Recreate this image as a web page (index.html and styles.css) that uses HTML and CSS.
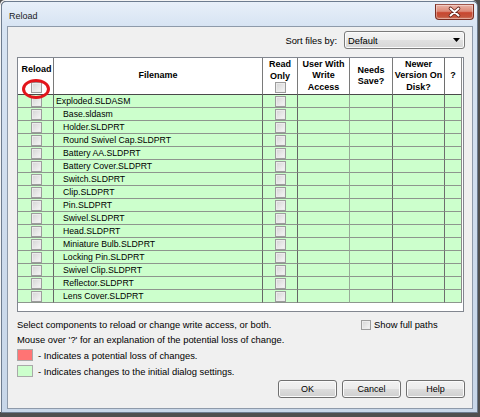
FILE: index.html
```html
<!DOCTYPE html>
<html>
<head>
<meta charset="utf-8">
<title>Reload</title>
<link rel="stylesheet" href="styles.css">
</head>
<body>
<div class="window">
  <div class="titlebar">
    <span class="title">Reload</span>
    <div class="close">
      <svg width="37" height="14" viewBox="0 0 37 14">
        <path d="M14.5 3.5 L22.5 10.5 M22.5 3.5 L14.5 10.5" stroke="#5b1d14" stroke-width="3.6" stroke-linecap="round" fill="none"/>
        <path d="M14.5 3.5 L22.5 10.5 M22.5 3.5 L14.5 10.5" stroke="#ffffff" stroke-width="2" stroke-linecap="round" fill="none"/>
      </svg>
    </div>
  </div>
  <div class="client">
    <div class="sortrow">
      <span>Sort files by:</span>
      <div class="combo">
        <span>Default</span>
        <svg width="7" height="4" viewBox="0 0 7 4"><polygon points="0,0 7,0 3.5,4" fill="#000"/></svg>
      </div>
    </div>

    <div class="listbox">
      <div class="row head">
        <div class="hc reload"><span class="rl">Reload</span><span class="cb"></span><div class="ring"></div></div>
        <div class="hc">Filename</div>
        <div class="hc ro"><span>Read<br>Only</span><span class="cb"></span></div>
        <div class="hc">User With<br>Write<br>Access</div>
        <div class="hc">Needs<br>Save?</div>
        <div class="hc">Newer<br>Version On<br>Disk?</div>
        <div class="hc">?</div>
      </div>
      <div class="row"><div class="c"><span class="cb"></span></div><div class="c fn">Exploded.SLDASM</div><div class="c"><span class="cb"></span></div><div class="c"></div><div class="c"></div><div class="c"></div><div class="c"></div></div>
      <div class="row"><div class="c"><span class="cb"></span></div><div class="c fn sub">Base.sldasm</div><div class="c"><span class="cb"></span></div><div class="c"></div><div class="c"></div><div class="c"></div><div class="c"></div></div>
      <div class="row"><div class="c"><span class="cb"></span></div><div class="c fn sub">Holder.SLDPRT</div><div class="c"><span class="cb"></span></div><div class="c"></div><div class="c"></div><div class="c"></div><div class="c"></div></div>
      <div class="row"><div class="c"><span class="cb"></span></div><div class="c fn sub">Round Swivel Cap.SLDPRT</div><div class="c"><span class="cb"></span></div><div class="c"></div><div class="c"></div><div class="c"></div><div class="c"></div></div>
      <div class="row"><div class="c"><span class="cb"></span></div><div class="c fn sub">Battery AA.SLDPRT</div><div class="c"><span class="cb"></span></div><div class="c"></div><div class="c"></div><div class="c"></div><div class="c"></div></div>
      <div class="row"><div class="c"><span class="cb"></span></div><div class="c fn sub">Battery Cover.SLDPRT</div><div class="c"><span class="cb"></span></div><div class="c"></div><div class="c"></div><div class="c"></div><div class="c"></div></div>
      <div class="row"><div class="c"><span class="cb"></span></div><div class="c fn sub">Switch.SLDPRT</div><div class="c"><span class="cb"></span></div><div class="c"></div><div class="c"></div><div class="c"></div><div class="c"></div></div>
      <div class="row"><div class="c"><span class="cb"></span></div><div class="c fn sub">Clip.SLDPRT</div><div class="c"><span class="cb"></span></div><div class="c"></div><div class="c"></div><div class="c"></div><div class="c"></div></div>
      <div class="row"><div class="c"><span class="cb"></span></div><div class="c fn sub">Pin.SLDPRT</div><div class="c"><span class="cb"></span></div><div class="c"></div><div class="c"></div><div class="c"></div><div class="c"></div></div>
      <div class="row"><div class="c"><span class="cb"></span></div><div class="c fn sub">Swivel.SLDPRT</div><div class="c"><span class="cb"></span></div><div class="c"></div><div class="c"></div><div class="c"></div><div class="c"></div></div>
      <div class="row"><div class="c"><span class="cb"></span></div><div class="c fn sub">Head.SLDPRT</div><div class="c"><span class="cb"></span></div><div class="c"></div><div class="c"></div><div class="c"></div><div class="c"></div></div>
      <div class="row"><div class="c"><span class="cb"></span></div><div class="c fn sub">Miniature Bulb.SLDPRT</div><div class="c"><span class="cb"></span></div><div class="c"></div><div class="c"></div><div class="c"></div><div class="c"></div></div>
      <div class="row"><div class="c"><span class="cb"></span></div><div class="c fn sub">Locking Pin.SLDPRT</div><div class="c"><span class="cb"></span></div><div class="c"></div><div class="c"></div><div class="c"></div><div class="c"></div></div>
      <div class="row"><div class="c"><span class="cb"></span></div><div class="c fn sub">Swivel Clip.SLDPRT</div><div class="c"><span class="cb"></span></div><div class="c"></div><div class="c"></div><div class="c"></div><div class="c"></div></div>
      <div class="row"><div class="c"><span class="cb"></span></div><div class="c fn sub">Reflector.SLDPRT</div><div class="c"><span class="cb"></span></div><div class="c"></div><div class="c"></div><div class="c"></div><div class="c"></div></div>
      <div class="row"><div class="c"><span class="cb"></span></div><div class="c fn sub">Lens Cover.SLDPRT</div><div class="c"><span class="cb"></span></div><div class="c"></div><div class="c"></div><div class="c"></div><div class="c"></div></div>
    </div>

    <div class="info first">
      <span>Select components to reload or change write access, or both.</span>
      <label class="fullpaths"><span class="cb small"></span><span>Show full paths</span></label>
    </div>
    <div class="info">Mouse over '?' for an explanation of the potential loss of change.</div>
    <div class="legend"><span class="swatch red"></span><span>- Indicates a potential loss of changes.</span></div>
    <div class="legend"><span class="swatch green"></span><span>- Indicates changes to the initial dialog settings.</span></div>

    <div class="buttons">
      <div class="btn">OK</div>
      <div class="btn">Cancel</div>
      <div class="btn">Help</div>
    </div>
  </div>
</div>
</body>
</html>
```

FILE: styles.css
```css
* { box-sizing: border-box; }

html, body { margin: 0; padding: 0; }

body {
  width: 480px;
  height: 417px;
  overflow: hidden;
  background: #4f4f4f;
  font-family: "Liberation Sans", Arial, sans-serif;
  font-size: 9.4px;
  color: #000;
}

.window {
  width: 477px;
  height: 412px;
  margin: 1px 0 0 1px;
  border: 1px solid #6d7c8f;
  border-radius: 5px 5px 0 0;
  padding: 0 4px 3px 5px;
  background: linear-gradient(#e8f0f9, #d7e4f3 24px, #cddbec 60%, #c8d7e9);
  box-shadow: -1px -1px 0 #f4f4f4;
  display: flex;
  flex-direction: column;
}

.titlebar {
  height: 24px;
  flex: none;
  display: flex;
  justify-content: space-between;
  align-items: flex-start;
  margin: 0 -1px 0 2px;
}

.title {
  padding-top: 8px;
  font-size: 9px;
  line-height: 12px;
  color: #1a1a1a;
}

.close {
  margin-top: 2px;
  width: 39px;
  height: 16px;
  border: 1px solid #7a2e22;
  border-top-color: #a0564a;
  border-radius: 0 0 4px 4px;
  background: linear-gradient(#eab3a6, #dd8a78 45%, #c8462f 55%, #c4553d 85%, #d9866f);
  box-shadow: inset 0 0 0 1px rgba(255,255,255,0.35);
  display: flex;
  align-items: center;
  justify-content: center;
}

.close svg { display: block; }

.client {
  flex: 1;
  border: 1px solid #8e9aaa;
  background: #f0f0f0;
  padding: 4px 7px 0 9px;
  display: flex;
  flex-direction: column;
}

.sortrow {
  height: 18px;
  display: flex;
  justify-content: flex-end;
  align-items: center;
  gap: 7px;
}

.combo {
  width: 121px;
  height: 18px;
  border: 1px solid #7a7a7a;
  border-radius: 3px;
  background: linear-gradient(#f4f4f4, #ececec 50%, #e0e0e0 50%, #d6d6d6);
  box-shadow: inset 0 0 0 1px #fbfbfb;
  display: flex;
  align-items: center;
  justify-content: space-between;
  padding: 0 4px 0 3px;
}

.listbox {
  margin-top: 8px;
  width: 447px;
  height: 255px;
  flex: none;
  border: 1px solid #828790;
  background: #fff;
}

.row {
  display: grid;
  grid-template-columns: 36px 209px 35px 52px 43px 52px 17px;
  width: 444px;
  height: 13px;
  background: #ccffcc;
}

.row.head {
  height: 37px;
  background: #fff;
}

.c, .hc {
  border-right: 1px solid #666;
  border-bottom: 1px solid #8e968e;
  display: flex;
  align-items: center;
  justify-content: center;
  font-size: 8.7px;
  white-space: nowrap;
}

.row > :nth-child(4) { border-right-color: #98ab98; }
.row > :nth-child(6) { border-right-color: #6e6e6e; }
.row > :nth-child(7) { border-right-color: #8a8a8a; }
.row > :nth-child(1) { padding-left: 2px; }

.c.fn {
  justify-content: flex-start;
  padding-left: 2px;
}

.c.fn.sub { padding-left: 9px; }

.hc {
  position: relative;
  flex-direction: column;
  font-weight: bold;
  font-size: 9px;
  line-height: 11.5px;
  text-align: center;
  border-bottom-color: #4a4a4a;
  border-right-color: #7a7a7a;
}

.row.head > :nth-child(4) { border-right-color: #7a7a7a; }

.hc.reload, .hc.ro {
  justify-content: flex-end;
  padding-bottom: 1px;
}

.hc.reload .rl {
  line-height: 12px;
  margin-bottom: 7px;
}

.hc.ro span:first-child { line-height: 12px; }

.cb {
  display: block;
  width: 11px;
  height: 11px;
  flex: none;
  border: 1px solid #9c9c9c;
  background: linear-gradient(135deg, #d4d4d4, #f7f7f7);
  box-shadow: inset 0 0 0 1px #ececec;
}

.cb.small {
  width: 10px;
  height: 10px;
}

.ring {
  position: absolute;
  left: 4px;
  top: 21px;
  width: 28px;
  height: 20px;
  border: 3px solid #e3161c;
  border-radius: 50%;
  z-index: 2;
}

.info {
  height: 15px;
  display: flex;
  align-items: center;
}

.info.first {
  margin-top: 5px;
  display: grid;
  grid-template-columns: 344px 1fr;
  align-items: center;
}

.fullpaths {
  display: flex;
  align-items: center;
  gap: 3px;
}

.legend {
  height: 16px;
  display: flex;
  align-items: center;
  gap: 5px;
}

.swatch {
  width: 16px;
  height: 12px;
  border: 1px solid #a9a9a9;
}

.swatch.red { background: #ff7474; }
.swatch.green { background: #ccffcc; }

.buttons {
  margin-top: 1px;
  display: flex;
  justify-content: flex-end;
  gap: 5px;
}

.btn {
  width: 59px;
  height: 18px;
  border: 1px solid #707070;
  border-radius: 3px;
  background: linear-gradient(#f2f2f2, #ebebeb 50%, #dddddd 50%, #cfcfcf);
  box-shadow: inset 0 0 0 1px #fbfbfb;
  display: flex;
  align-items: center;
  justify-content: center;
  font-size: 9px;
}
```
